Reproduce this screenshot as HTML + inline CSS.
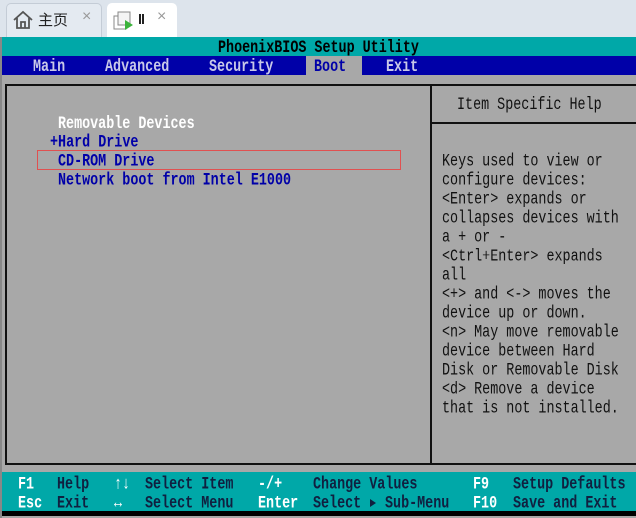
<!DOCTYPE html>
<html><head><meta charset="utf-8"><style>
*{margin:0;padding:0;box-sizing:border-box}
body{width:636px;height:518px;overflow:hidden;background:#dde4ec;position:relative;font-family:"Liberation Mono",monospace}
.a{position:absolute}
.t{position:absolute;font-size:13.4px;line-height:19px;height:19px;white-space:pre;transform:translateY(2px) scaleY(1.3);transform-origin:0 50%;font-weight:bold;letter-spacing:0px}
.h{font-weight:normal;color:#111}
</style></head><body>
<!-- tabs -->
<div class="a" style="left:6px;top:3px;width:96px;height:34px;background:#e4eaf1;border:1px solid #c4ccd6;border-bottom:none;border-radius:5px 5px 0 0"></div>
<svg class="a" style="left:12px;top:9px" width="22" height="22" viewBox="0 0 22 22"><path d="M2 11 L11 3 L20 11 M5 9 V19 H17 V9 M9 19 V13 H13 V19" fill="none" stroke="#555" stroke-width="1.8"/></svg>
<div class="a" style="left:38px;top:9px;font:15px 'Noto Sans CJK SC',sans-serif;color:#222">主页</div>
<div class="a" style="left:82px;top:8px;font:16px 'Liberation Sans',sans-serif;color:#999">×</div>
<div class="a" style="left:107px;top:3px;width:70px;height:34px;background:#fff;border-radius:5px 5px 0 0"></div>
<svg class="a" style="left:113px;top:10px" width="22" height="22" viewBox="0 0 22 22"><rect x="1" y="6" width="12" height="13" fill="#fff" stroke="#888"/><rect x="5" y="2" width="12" height="13" fill="#f4f4f4" stroke="#888"/><path d="M12 10 L20 15 L12 20Z" fill="#3bb33b"/></svg>
<div class="a" style="left:139px;top:14px;width:2px;height:10px;background:#222"></div>
<div class="a" style="left:142px;top:14px;width:2px;height:10px;background:#222"></div>
<div class="a" style="left:157px;top:8px;font:16px 'Liberation Sans',sans-serif;color:#999">×</div>
<!-- bios -->
<div class="a" style="left:0;top:37px;width:636px;height:481px;background:#a8a8a8"></div>
<div class="a" style="left:0;top:37px;width:2px;height:481px;background:#888"></div>
<div class="a" style="left:2px;top:37px;width:634px;height:19px;background:#00a8a8"></div>
<div class="t" style="left:218px;top:37px;color:#000">PhoenixBIOS Setup Utility</div>
<div class="a" style="left:2px;top:56px;width:634px;height:19px;background:#0000a8"></div>
<div class="a" style="left:306px;top:56px;width:56px;height:19px;background:#a8a8a8"></div>
<div class="t" style="left:33px;top:56px;color:#c8c8e8">Main</div>
<div class="t" style="left:105px;top:56px;color:#c8c8e8">Advanced</div>
<div class="t" style="left:209px;top:56px;color:#c8c8e8">Security</div>
<div class="t" style="left:314px;top:56px;color:#0000a8">Boot</div>
<div class="t" style="left:386px;top:56px;color:#c8c8e8">Exit</div>
<div class="a" style="left:5px;top:84px;width:640px;height:381px;border:2px solid #111"></div>
<div class="a" style="left:430px;top:84px;width:2px;height:381px;background:#111"></div>
<div class="a" style="left:430px;top:122px;width:210px;height:2px;background:#111"></div>
<div class="t h" style="left:457px;top:94px">Item Specific Help</div>
<div class="t" style="left:58px;top:113px;color:#fff">Removable Devices</div>
<div class="t" style="left:50px;top:132px;color:#0000a8">+Hard Drive</div>
<div class="t" style="left:58px;top:151px;color:#0000a8">CD-ROM Drive</div>
<div class="t" style="left:58px;top:170px;color:#0000a8">Network boot from Intel E1000</div>
<div class="a" style="left:37px;top:150px;width:364px;height:20px;border:1px solid #e05050"></div>
<div class="t h" style="left:442px;top:151px">Keys used to view or</div>
<div class="t h" style="left:442px;top:170px">configure devices:</div>
<div class="t h" style="left:442px;top:189px">&lt;Enter&gt; expands or</div>
<div class="t h" style="left:442px;top:208px">collapses devices with</div>
<div class="t h" style="left:442px;top:227px">a + or -</div>
<div class="t h" style="left:442px;top:246px">&lt;Ctrl+Enter&gt; expands</div>
<div class="t h" style="left:442px;top:265px">all</div>
<div class="t h" style="left:442px;top:284px">&lt;+&gt; and &lt;-&gt; moves the</div>
<div class="t h" style="left:442px;top:303px">device up or down.</div>
<div class="t h" style="left:442px;top:322px">&lt;n&gt; May move removable</div>
<div class="t h" style="left:442px;top:341px">device between Hard</div>
<div class="t h" style="left:442px;top:360px">Disk or Removable Disk</div>
<div class="t h" style="left:442px;top:379px">&lt;d&gt; Remove a device</div>
<div class="t h" style="left:442px;top:398px">that is not installed.</div>
<!-- footer -->
<div class="a" style="left:2px;top:472px;width:634px;height:39px;background:#00a8a8"></div>
<div class="a" style="left:2px;top:511px;width:634px;height:5px;background:#000"></div>
<div class="t" style="left:18px;top:474px;color:#fff">F1</div>
<div class="t" style="left:57px;top:474px;color:#102040">Help</div>
<div class="t" style="left:114px;top:474px;color:#fff">↑↓</div>
<div class="t" style="left:145px;top:474px;color:#102040">Select Item</div>
<div class="t" style="left:258px;top:474px;color:#fff">-/+</div>
<div class="t" style="left:313px;top:474px;color:#102040">Change Values</div>
<div class="t" style="left:473px;top:474px;color:#fff">F9</div>
<div class="t" style="left:513px;top:474px;color:#102040">Setup Defaults</div>
<div class="t" style="left:18px;top:493px;color:#fff">Esc</div>
<div class="t" style="left:57px;top:493px;color:#102040">Exit</div>
<div class="t" style="left:114px;top:493px;color:#fff">↔</div>
<div class="t" style="left:145px;top:493px;color:#102040">Select Menu</div>
<div class="t" style="left:258px;top:493px;color:#fff">Enter</div>
<div class="t" style="left:313px;top:493px;color:#102040">Select</div>
<svg class="a" style="left:369px;top:498px" width="8" height="10" viewBox="0 0 8 10"><path d="M1 1 L7 5 L1 9Z" fill="#102040"/></svg>
<div class="t" style="left:385px;top:493px;color:#102040">Sub-Menu</div>
<div class="t" style="left:473px;top:493px;color:#fff">F10</div>
<div class="t" style="left:513px;top:493px;color:#102040">Save and Exit</div>
</body></html>
